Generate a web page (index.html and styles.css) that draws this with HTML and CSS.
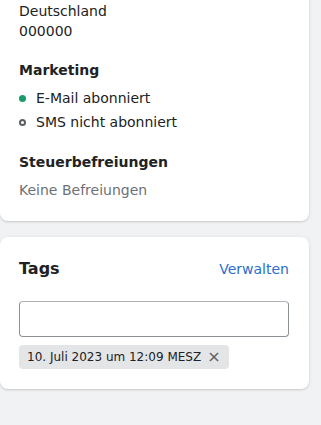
FILE: index.html
```html
<!DOCTYPE html>
<html lang="de">
<head>
    <meta charset="UTF-8">
    <meta name="viewport" content="width=device-width, initial-scale=1.0">
    <title>Kunde</title>
    <link rel="stylesheet" href="styles.css">
</head>
<body>
    <div class="page">
        <div class="card card-top">
            <div class="section">
                <p class="line">Deutschland</p>
                <p class="line">000000</p>
            </div>

            <div class="section">
                <h3 class="section-title">Marketing</h3>
                <ul class="status-list">
                    <li class="status-item"><span class="dot dot-on"></span>E-Mail abonniert</li>
                    <li class="status-item"><span class="dot dot-off"></span>SMS nicht abonniert</li>
                </ul>
            </div>

            <div class="section">
                <h3 class="section-title">Steuerbefreiungen</h3>
                <p class="line subdued">Keine Befreiungen</p>
            </div>
        </div>

        <div class="card">
            <div class="card-header">
                <h2 class="card-title">Tags</h2>
                <a href="#" class="link">Verwalten</a>
            </div>
            <input type="text" class="tag-input">
            <div class="tag-list">
                <span class="tag">10. Juli 2023 um 12:09 MESZ <button type="button" class="tag-remove">&times;</button></span>
            </div>
        </div>
    </div>
</body>
</html>
```
FILE: styles.css
```css
body {
    font-family: 'DejaVu Sans', sans-serif;
    font-size: 14px;
    line-height: 20px;
    color: #202223;
    background: #f1f2f3;
    margin: 0;
}

.page {
    display: flex;
    flex-direction: column;
    gap: 16px;
    padding: 0 12px 40px 0;
}

.card {
    background: #fff;
    border-radius: 8px;
    box-shadow: 0 0 5px rgba(23, 24, 24, 0.05), 0 1px 2px rgba(0, 0, 0, 0.15);
    padding: 20px 20px 20px 19px;
}

.card-top {
    margin-top: -20px;
    padding-top: 21px;
    padding-bottom: 21px;
    display: flex;
    flex-direction: column;
    gap: 19px;
}

.card-top .section:last-child {
    margin-top: 1px;
}

.line {
    margin: 0;
}

.subdued {
    color: #6d7175;
}

.section-title {
    font-size: 14px;
    font-weight: 700;
    line-height: 20px;
    margin: 0 0 8px;
}

.status-list {
    list-style: none;
    margin: 0;
    padding: 0;
    display: flex;
    flex-direction: column;
    gap: 4px;
}

.status-item {
    display: flex;
    align-items: center;
    gap: 10px;
}

.dot {
    width: 7px;
    height: 7px;
    border-radius: 50%;
    box-sizing: border-box;
}

.dot-on {
    background: #1a9b6c;
}

.dot-off {
    border: 2px solid #5c5f62;
}

.card-header {
    display: flex;
    justify-content: space-between;
    align-items: baseline;
    margin-bottom: 20px;
}

.card-title {
    font-size: 16px;
    font-weight: 700;
    line-height: 24px;
    margin: 0;
}

.link {
    color: #2c6ecb;
    text-decoration: none;
}

.tag-input {
    display: block;
    width: 100%;
    box-sizing: border-box;
    height: 36px;
    border: 1px solid #8c9196;
    border-top-color: #aeb4b9;
    border-radius: 4px;
    margin: 0 0 8px;
}

.tag-list {
    display: flex;
    flex-wrap: wrap;
    gap: 8px;
}

.tag {
    display: flex;
    align-items: center;
    gap: 6px;
    height: 24px;
    padding: 0 8px;
    background: #e4e5e7;
    border-radius: 4px;
    font-size: 12px;
}

.tag-remove {
    border: none;
    background: none;
    padding: 0;
    font-family: inherit;
    font-size: 16px;
    line-height: 1;
    color: #5c5f62;
    cursor: pointer;
}
```
